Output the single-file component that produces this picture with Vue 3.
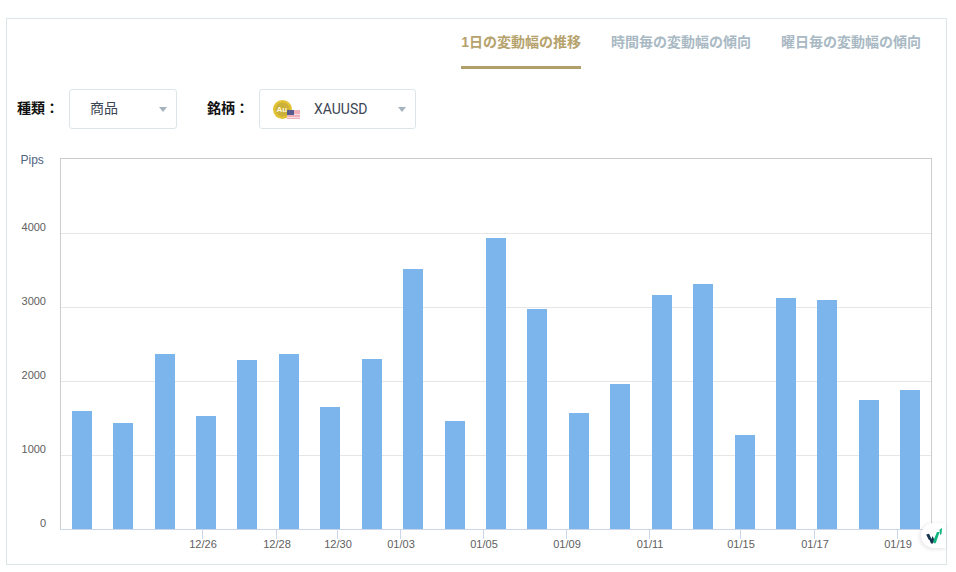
<template>
  <div class="page">
    <div class="card">
      <nav class="tabs">
        <a
          v-for="(tab, index) in tabs"
          :key="tab"
          class="tab"
          :class="{ active: index === 0 }"
        >{{ tab }}</a>
      </nav>

      <div class="filters">
        <label class="filter-label">種類：</label>
        <div class="select select-type">
          <span class="select-text cjk">商品</span>
          <i class="caret"></i>
        </div>
        <label class="filter-label label-symbol">銘柄：</label>
        <div class="select select-symbol">
          <svg class="symbol-icon" width="28" height="20" viewBox="0 0 28 20">
            <circle cx="9.5" cy="9.5" r="9.5" fill="#e3c233" />
            <circle cx="9.5" cy="9.5" r="7" fill="#cbb03c" />
            <text x="8.8" y="12" class="coin-text" text-anchor="middle">Au</text>
            <rect x="14" y="10" width="13" height="9" fill="#eeb0ba" />
            <rect x="14" y="14" width="13" height="1" fill="#f6dde1" />
            <rect x="14" y="17" width="13" height="1" fill="#f6dde1" />
            <rect x="14" y="10" width="7" height="5" fill="#565c8e" />
          </svg>
          <span class="select-text">XAUUSD</span>
          <i class="caret"></i>
        </div>
      </div>

      <!-- 座標はページ基準にしてある -->
      <svg class="chart" viewBox="7 139 938 424" width="938" height="424">
        <line x1="60" x2="931" y1="158.5" y2="158.5" stroke="#cccccc" />
        <line x1="60.5" x2="60.5" y1="158" y2="529" stroke="#cccccc" />
        <line x1="931.5" x2="931.5" y1="158" y2="529" stroke="#cccccc" />
        <line
          v-for="y in gridLines"
          :key="y"
          x1="61"
          x2="931"
          :y1="y + 0.5"
          :y2="y + 0.5"
          stroke="#e6e6e6"
        />
        <rect
          v-for="bar in bars"
          :key="bar.x"
          :x="bar.x"
          :y="bar.top"
          width="20"
          :height="axisY - bar.top"
          fill="#7cb5ec"
        />
        <line x1="60" x2="932" :y1="axisY + 0.5" :y2="axisY + 0.5" stroke="#ccd6eb" />

        <text x="20.5" y="164" class="axis-title">Pips</text>
        <text
          v-for="label in yLabels"
          :key="label.text"
          x="46"
          :y="label.y"
          class="axis-label"
          text-anchor="end"
        >{{ label.text }}</text>

        <g v-for="tick in xTicks" :key="tick.text">
          <line :x1="tick.x + 0.5" :x2="tick.x + 0.5" y1="529" y2="539" stroke="#ccd6eb" />
          <text :x="tick.x + 1" y="548" class="axis-label" text-anchor="middle">{{ tick.text }}</text>
        </g>
      </svg>

      <div class="badge">
        <svg width="18" height="18" viewBox="0 0 18 18">
          <path d="M1.2 7.5 L4 6.8 L6.5 12 L7.5 9 L9.5 13 L8 16.6 L6 16.6 L4.6 13 L3.6 12.5 Z" fill="#16324f" />
          <path d="M9.5 16.6 L8.2 14 L12 5 L14.6 5 L10.8 16 Z" fill="#0fb57f" />
          <path d="M15 8 L14.6 2.5 L17 1 L16.5 7 Z" fill="#0fb57f" />
        </svg>
      </div>
    </div>
  </div>
</template>

<script setup>
const tabs = ['1日の変動幅の推移', '時間毎の変動幅の傾向', '曜日毎の変動幅の傾向'];

const axisY = 529;
const gridLines = [233, 307, 381, 455];

const yLabels = [
  { text: '4000', y: 231 },
  { text: '3000', y: 305 },
  { text: '2000', y: 379 },
  { text: '1000', y: 453 },
  { text: '0', y: 527 }
];

const bars = [
  { x: 72, top: 411 },
  { x: 113, top: 423 },
  { x: 155, top: 354 },
  { x: 196, top: 416 },
  { x: 237, top: 360 },
  { x: 279, top: 354 },
  { x: 320, top: 407 },
  { x: 362, top: 359 },
  { x: 403, top: 269 },
  { x: 445, top: 421 },
  { x: 486, top: 238 },
  { x: 527, top: 309 },
  { x: 569, top: 413 },
  { x: 610, top: 384 },
  { x: 652, top: 295 },
  { x: 693, top: 284 },
  { x: 735, top: 435 },
  { x: 776, top: 298 },
  { x: 817, top: 300 },
  { x: 859, top: 400 },
  { x: 900, top: 390 }
];

const xTicks = [
  { text: '12/26', x: 202 },
  { text: '12/28', x: 276 },
  { text: '12/30', x: 337 },
  { text: '01/03', x: 400 },
  { text: '01/05', x: 483 },
  { text: '01/09', x: 566 },
  { text: '01/11', x: 649 },
  { text: '01/15', x: 740 },
  { text: '01/17', x: 814 },
  { text: '01/19', x: 897 }
];
</script>

<style>
html,
body {
  background: #fff;
}
</style>

<style scoped>
.page {
  padding: 18px 9px 0 6px;
  font-family: Roboto, 'Noto Sans CJK JP', sans-serif;
}

.card {
  position: relative;
  width: 941px;
  height: 547px;
  box-sizing: border-box;
  border: 1px solid #dce6e9;
  background: #fff;
}

.tabs {
  display: flex;
  justify-content: flex-end;
  gap: 30px;
  padding-right: 25px;
  height: 50px;
  font-family: 'Liberation Sans', 'Noto Sans CJK JP', sans-serif;
}

.tab {
  box-sizing: border-box;
  height: 50px;
  padding-top: 13px;
  font-size: 14px;
  line-height: 20px;
  font-weight: 700;
  color: #a9b9c4;
}

.tab.active {
  color: #b5a26c;
  border-bottom: 3px solid #b19f69;
}

.filters {
  display: flex;
  align-items: center;
  margin-top: 20px;
  padding-left: 10px;
  height: 40px;
}

.filter-label {
  width: 52px;
  flex: none;
  margin-bottom: 4px;
  font-size: 14px;
  font-weight: 700;
  color: #111;
}

.label-symbol {
  margin-left: 30px;
}

.select {
  position: relative;
  display: flex;
  align-items: center;
  box-sizing: border-box;
  height: 40px;
  border: 1px solid #dce6e9;
  border-radius: 3px;
  font-size: 14px;
  color: #3c4654;
}

.select-type {
  width: 108px;
  padding-left: 20px;
}

.select-symbol {
  width: 157px;
  padding-left: 13px;
}

.select-text {
  margin-bottom: 1px;
}

.select-text.cjk {
  margin-bottom: 4px;
}

.symbol-icon {
  flex: none;
  margin-right: 13px;
  margin-top: 1px;
}

.coin-text {
  font-family: 'Liberation Sans', sans-serif;
  font-size: 8px;
  font-weight: 700;
  fill: #fff7d6;
}

.caret {
  position: absolute;
  right: 9px;
  top: 17px;
  width: 0;
  height: 0;
  border-left: 4px solid transparent;
  border-right: 4px solid transparent;
  border-top: 5px solid #a5b3bf;
}

.chart {
  display: block;
  margin-top: 10px;
}

.axis-label {
  font-family: 'Liberation Sans', sans-serif;
  font-size: 11px;
  fill: #606060;
}

.axis-title {
  font-family: 'Liberation Sans', sans-serif;
  font-size: 12px;
  fill: #4f6480;
}

.badge {
  position: absolute;
  right: 0;
  top: 504px;
  display: flex;
  align-items: center;
  justify-content: center;
  width: 25px;
  height: 25px;
  background: #fff;
  border-radius: 13px 0 0 13px;
  box-shadow: -1px 1px 4px rgba(0, 0, 0, 0.12);
}
</style>
